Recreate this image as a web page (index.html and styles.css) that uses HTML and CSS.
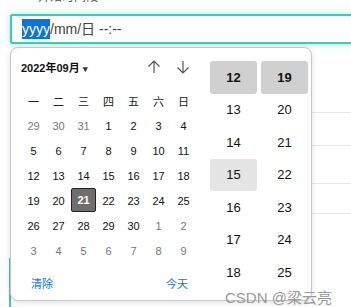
FILE: index.html
```html
<!DOCTYPE html>
<html lang="zh">
<head>
  <meta charset="UTF-8">
  <title>日期时间选择</title>
  <meta name="viewport" content="width=device-width, initial-scale=1.0">
  <link rel="stylesheet" href="styles.css">
</head>
<body>

  <div class="page">
    <p class="field-label">开始时间段</p>
    <div class="datetime-input">
      <span class="seg-selected">yyyy</span>/mm/日 --:--
    </div>

    <div class="rows">
      <div class="row"></div>
      <div class="row"></div>
      <div class="row"></div>
      <div class="row"></div>
    </div>
    <div class="side-mark"></div>
  </div>

  <!-- Picker popup -->
  <div class="picker">
    <div class="calendar">
      <div class="cal-header">
        <span class="month">2022年09月 <span class="caret">&#9662;</span></span>
        <span class="nav">
          <svg width="16" height="16" viewBox="0 0 16 16"><path d="M8 14V2M2.5 7.5L8 2l5.5 5.5" fill="none" stroke="#555" stroke-width="1.2"/></svg>
          <svg width="16" height="16" viewBox="0 0 16 16"><path d="M8 2v12M2.5 8.5L8 14l5.5-5.5" fill="none" stroke="#555" stroke-width="1.2"/></svg>
        </span>
      </div>
      <div class="cal-grid" id="cal-grid"></div>
      <div class="cal-footer">
        <span>清除</span>
        <span>今天</span>
      </div>
    </div>
    <div class="time-col" id="hours"></div>
    <div class="time-col" id="minutes"></div>
  </div>

  <div class="watermark">CSDN @梁云亮</div>

  <script>
    const grid = document.getElementById('cal-grid');
    const weekdays = ['一', '二', '三', '四', '五', '六', '日'];
    weekdays.forEach(w => {
      const c = document.createElement('span');
      c.className = 'cell weekday';
      c.textContent = w;
      grid.appendChild(c);
    });

    const days = [];
    [29, 30, 31].forEach(d => days.push({ d, other: true }));
    for (let d = 1; d <= 30; d++) days.push({ d });
    for (let d = 1; d <= 9; d++) days.push({ d, other: true });

    days.forEach(item => {
      const c = document.createElement('span');
      c.className = 'cell day';
      if (item.other) c.classList.add('other');
      if (!item.other && item.d === 21) c.classList.add('selected');
      c.textContent = item.d;
      grid.appendChild(c);
    });

    function fillColumn(id, from, to, selected, hover) {
      const col = document.getElementById(id);
      for (let i = from; i <= to; i++) {
        const c = document.createElement('div');
        c.className = 'time-cell';
        if (i === selected) c.classList.add('selected');
        if (i === hover) c.classList.add('hover');
        c.textContent = i;
        col.appendChild(c);
      }
    }
    fillColumn('hours', 12, 18, 12, 15);
    fillColumn('minutes', 19, 25, 19, -1);
  </script>

</body>
</html>
```

FILE: styles.css
```css
/* Base styles */
body {
  margin: 0;
  background: #fff;
  color: #222;
  font-family: "Liberation Sans", Arial, "Noto Sans CJK SC", sans-serif;
  overflow: hidden;
}

.page {
  position: relative;
  height: 307px;
  overflow: hidden;
}

.field-label {
  margin: -13px 0 0 38px;
  height: 14px;
  font-size: 12px;
  color: #555;
}

.datetime-input {
  margin: 13px 0 0 10px;
  width: 360px;
  height: 26px;
  border: 2px solid #3ccbb5;
  border-radius: 2px;
  box-shadow: 0 0 6px rgba(60, 203, 181, 0.45);
  padding-left: 10px;
  font-size: 14px;
  line-height: 26px;
  color: #444;
}

.seg-selected {
  background: #0a74d9;
  color: #fff;
  padding: 2px 0;
}

/* Background table rows behind the popup */
.rows {
  margin-left: 10px;
  padding-top: 36px;
}

.row {
  height: 32px;
  border-bottom: 1px solid #e6e6e6;
}

.row:nth-child(3) {
  height: 37px;
}

.row:nth-child(4) {
  height: 29px;
}

.side-mark {
  margin: 44px 0 0 9px;
  width: 2px;
  height: 62px;
  background: #3ccbb5;
}

/* Popup */
.picker {
  position: absolute;
  left: 10px;
  top: 47px;
  width: 300px;
  height: 252px;
  border: 1px solid #c6c6c6;
  border-radius: 8px;
  background: #fff;
  box-shadow: 0 2px 6px rgba(0, 0, 0, 0.12);
  display: flex;
  overflow: hidden;
}

.calendar {
  width: 175px;
  padding: 7px 0 0 10px;
  display: flex;
  flex-direction: column;
}

.cal-header {
  height: 24px;
  display: flex;
  align-items: center;
  justify-content: space-between;
}

.month {
  font-size: 11px;
  font-weight: bold;
  color: #111;
}

.caret {
  font-size: 9px;
  color: #333;
}

.nav {
  display: flex;
  gap: 13px;
  margin-right: 5px;
}

.cal-grid {
  margin-top: 9px;
  display: grid;
  grid-template-columns: repeat(7, 25px);
  grid-auto-rows: 25px;
}

.cell {
  display: flex;
  align-items: center;
  justify-content: center;
  font-size: 11px;
  color: #111;
}

.weekday {
  font-family: "Noto Sans CJK SC", sans-serif;
  color: #222;
}

.day.other {
  color: #777;
}

.day.selected {
  margin: 0 0 1px 0;
  background: #6e6e6e;
  border: 1px solid #222;
  border-radius: 2px;
  color: #fff;
  font-weight: bold;
}

.cal-footer {
  margin-top: 7px;
  height: 26px;
  padding: 0 8px 0 10px;
  display: flex;
  align-items: center;
  justify-content: space-between;
  font-size: 11px;
  color: #1a73d8;
  font-family: "Noto Sans CJK SC", sans-serif;
}

.time-col {
  margin-top: 13px;
  width: 47px;
  margin-left: 4px;
  display: flex;
  flex-direction: column;
}

#hours {
  margin-left: 14px;
}

.time-cell {
  flex: 0 0 32.5px;
  display: flex;
  align-items: center;
  justify-content: center;
  font-size: 13px;
  color: #111;
  border-radius: 3px;
}

.time-cell.selected {
  background: #d0d0d0;
  font-weight: bold;
}

.time-cell.hover {
  background: #e5e5e5;
}

.watermark {
  position: absolute;
  left: 225px;
  top: 286px;
  font-size: 15px;
  color: #999;
}
```
